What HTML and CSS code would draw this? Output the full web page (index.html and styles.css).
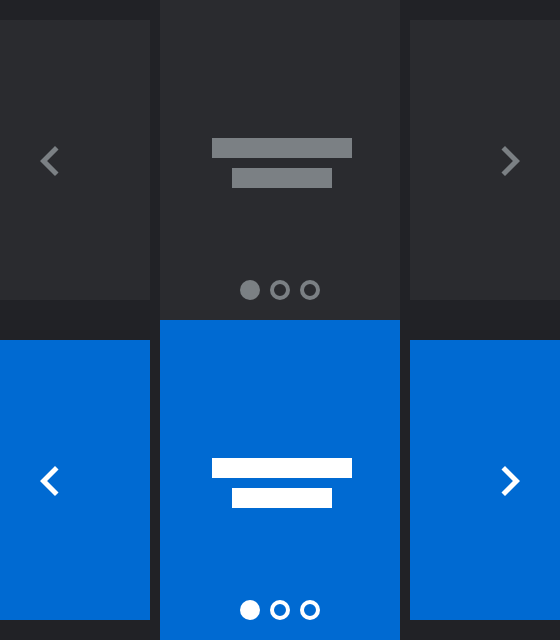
FILE: index.html
```html
<!DOCTYPE html>
<html>
<head>
<meta charset="utf-8">
<link rel="stylesheet" href="styles.css">
</head>
<body>
  <div class="row theme-dark">
    <div class="side side-left">
      <svg class="chev" viewBox="0 0 24 24"><path d="M15.41 7.41L14 6l-6 6 6 6 1.41-1.41L10.83 12z"/></svg>
    </div>
    <div class="main">
      <div class="bars">
        <div class="bar bar-long"></div>
        <div class="bar bar-short"></div>
      </div>
      <div class="dots">
        <span class="dot dot-on"></span>
        <span class="dot"></span>
        <span class="dot"></span>
      </div>
    </div>
    <div class="side side-right">
      <svg class="chev" viewBox="0 0 24 24"><path d="M10 6L8.59 7.41 13.17 12l-4.58 4.59L10 18l6-6z"/></svg>
    </div>
  </div>
  <div class="row theme-blue">
    <div class="side side-left">
      <svg class="chev" viewBox="0 0 24 24"><path d="M15.41 7.41L14 6l-6 6 6 6 1.41-1.41L10.83 12z"/></svg>
    </div>
    <div class="main">
      <div class="bars">
        <div class="bar bar-long"></div>
        <div class="bar bar-short"></div>
      </div>
      <div class="dots">
        <span class="dot dot-on"></span>
        <span class="dot"></span>
        <span class="dot"></span>
      </div>
    </div>
    <div class="side side-right">
      <svg class="chev" viewBox="0 0 24 24"><path d="M10 6L8.59 7.41 13.17 12l-4.58 4.59L10 18l6-6z"/></svg>
    </div>
  </div>
</body>
</html>
```
FILE: styles.css
```css
html, body {
  margin: 0;
  padding: 0;
  background: #212226;
  width: 560px;
  height: 640px;
  overflow: hidden;
  font-family: "Liberation Sans", sans-serif;
}
.row {
  display: flex;
  align-items: center;
  gap: 10px;
  height: 320px;
}
.theme-dark { --panel: #2a2b2f; --fg: #7b8084; }
.theme-blue { --panel: #006ad2; --fg: #ffffff; }
.side {
  width: 150px;
  height: 280px;
  background: var(--panel);
  display: flex;
  align-items: center;
  box-sizing: border-box;
  padding-top: 1px;
}
.side-left { padding-left: 20px; }
.side-right { padding-right: 20px; justify-content: flex-end; }
.chev {
  width: 60px;
  height: 60px;
  fill: var(--fg);
  display: block;
}
.main {
  width: 240px;
  height: 320px;
  background: var(--panel);
  display: flex;
  flex-direction: column;
  align-items: center;
  box-sizing: border-box;
  padding: 138px 0 20px;
}
.bars {
  display: flex;
  flex-direction: column;
  align-items: center;
  gap: 10px;
  margin-left: 4px;
}
.bar {
  height: 20px;
  background: var(--fg);
}
.bar-long { width: 140px; }
.bar-short { width: 100px; }
.dots {
  margin-top: auto;
  display: flex;
  gap: 10px;
}
.dot {
  width: 20px;
  height: 20px;
  border-radius: 50%;
  border: 4px solid var(--fg);
  box-sizing: border-box;
  display: block;
}
.dot-on { background: var(--fg); }
```
